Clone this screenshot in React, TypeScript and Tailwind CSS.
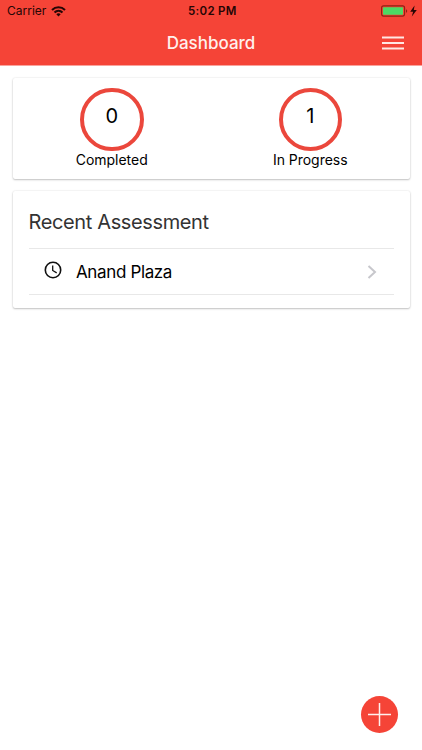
const shadow =
  'rounded-[2px] bg-white shadow-[0_1px_2px_rgba(0,0,0,0.22),0_0_2px_rgba(0,0,0,0.12)]';

function StatusBar() {
  return (
    <div className="relative flex h-[22px] items-center justify-between pl-[7px] pr-[4px] text-[12px] leading-[22px] text-[#250605]">
      <div className="flex items-center gap-[5px]">
        <span>Carrier</span>
        <svg width="15" height="11" viewBox="0 0 15 11" fill="none" stroke="currentColor" strokeWidth="2.1">
          <path d="M1 3.9a9.4 9.4 0 0 1 13 0" />
          <path d="M3.5 6.5a5.8 5.8 0 0 1 8 0" />
          <path d="M7.5 10.6 5.3 8.3a3.2 3.2 0 0 1 4.4 0Z" fill="currentColor" stroke="none" />
        </svg>
      </div>
      <span className="absolute left-[188px] whitespace-nowrap text-[11.5px] font-semibold tracking-[0.3px]">
        5:02 PM
      </span>
      <svg width="37" height="12" viewBox="0 0 37 12">
        <rect x="0.6" y="0.9" width="23" height="10.2" rx="2" fill="none" stroke="#8e2015" strokeWidth="1.1" />
        <rect x="2" y="2.3" width="20" height="7.4" rx="0.6" fill="#4cd964" />
        <path d="M25 4.2c1.6.5 1.6 3.1 0 3.6Z" fill="#8e2015" />
        <path d="M33.6.6 29.2 6.8h2.9L30.8 11.6l5-6.6h-3Z" fill="#250605" />
      </svg>
    </div>
  );
}

function Stat({ value, label }: { value: string; label: string }) {
  return (
    <div className="flex flex-1 flex-col items-center">
      <div className="flex h-[63.5px] w-[63.5px] justify-center rounded-full border-4 border-[#eb473c] pt-[10px] text-[20px] leading-[28px]">
        {value}
      </div>
      <div className="text-[14px] leading-[18px] tracking-[-0.03px]">{label}</div>
    </div>
  );
}

export default function App() {
  return (
    <div
      className="flex h-[750px] w-[422px] flex-col overflow-hidden bg-white text-black"
      style={{ fontFamily: 'Inter, "Liberation Sans", sans-serif' }}
    >
      <header className="h-[65px] shrink-0 bg-[#f54437] shadow-[0_1px_0_#f9a39c]">
        <StatusBar />
        <div className="relative flex h-[43px] items-center justify-end pr-[18px]">
          <h1 className="absolute inset-x-0 top-[8px] text-center text-[17px] font-medium leading-[26px] text-[#fff0ed]">
            Dashboard
          </h1>
          <svg className="-mt-[2px]" width="22" height="14" viewBox="0 0 22 14" fill="none" stroke="#ffe8e4" strokeWidth="1.8">
            <path d="M0 1.5h22M0 7h22M0 12.5h22" />
          </svg>
        </div>
      </header>

      <main className="flex flex-1 flex-col gap-3 px-[12.5px] pt-[13px]">
        <section className={`flex h-[101px] pt-[9.5px] ${shadow}`}>
          <Stat value="0" label="Completed" />
          <Stat value="1" label="In Progress" />
        </section>

        <section className={`h-[117px] px-4 ${shadow}`}>
          <h2 className="h-[57px] pt-[17px] text-[20px] leading-[28px] tracking-[-0.37px] text-[#333]">
            Recent Assessment
          </h2>
          <div className="flex h-[47px] items-center border-y border-[#e8e8e8] pl-[15.5px] pr-[17px]">
            <svg className="-mt-[3px]" width="18" height="18" viewBox="0 0 18 18" fill="none" stroke="#111" strokeWidth="1.6">
              <circle cx="9" cy="9" r="7.7" />
              <path d="M8.7 4.6v4.9l4 2.4" strokeWidth="1.3" />
            </svg>
            <span className="ml-[14px] flex-1 text-[17px] leading-[24px] tracking-[-0.36px]">Anand Plaza</span>
            <svg width="10" height="16" viewBox="0 0 10 16" fill="none" stroke="#c7c7cc" strokeWidth="2">
              <path d="M1.5 2 8 8l-6.5 6" />
            </svg>
          </div>
        </section>
      </main>

      <footer className="flex justify-end pb-[17px] pr-[24px]">
        <button className="flex h-[37px] w-[37px] items-center justify-center rounded-full bg-[#f54437]">
          <svg width="23" height="23" viewBox="0 0 23 23" fill="none" stroke="#fff0ed" strokeWidth="1.5">
            <path d="M11.5 0v23M0 11.5h23" />
          </svg>
        </button>
      </footer>
    </div>
  );
}
